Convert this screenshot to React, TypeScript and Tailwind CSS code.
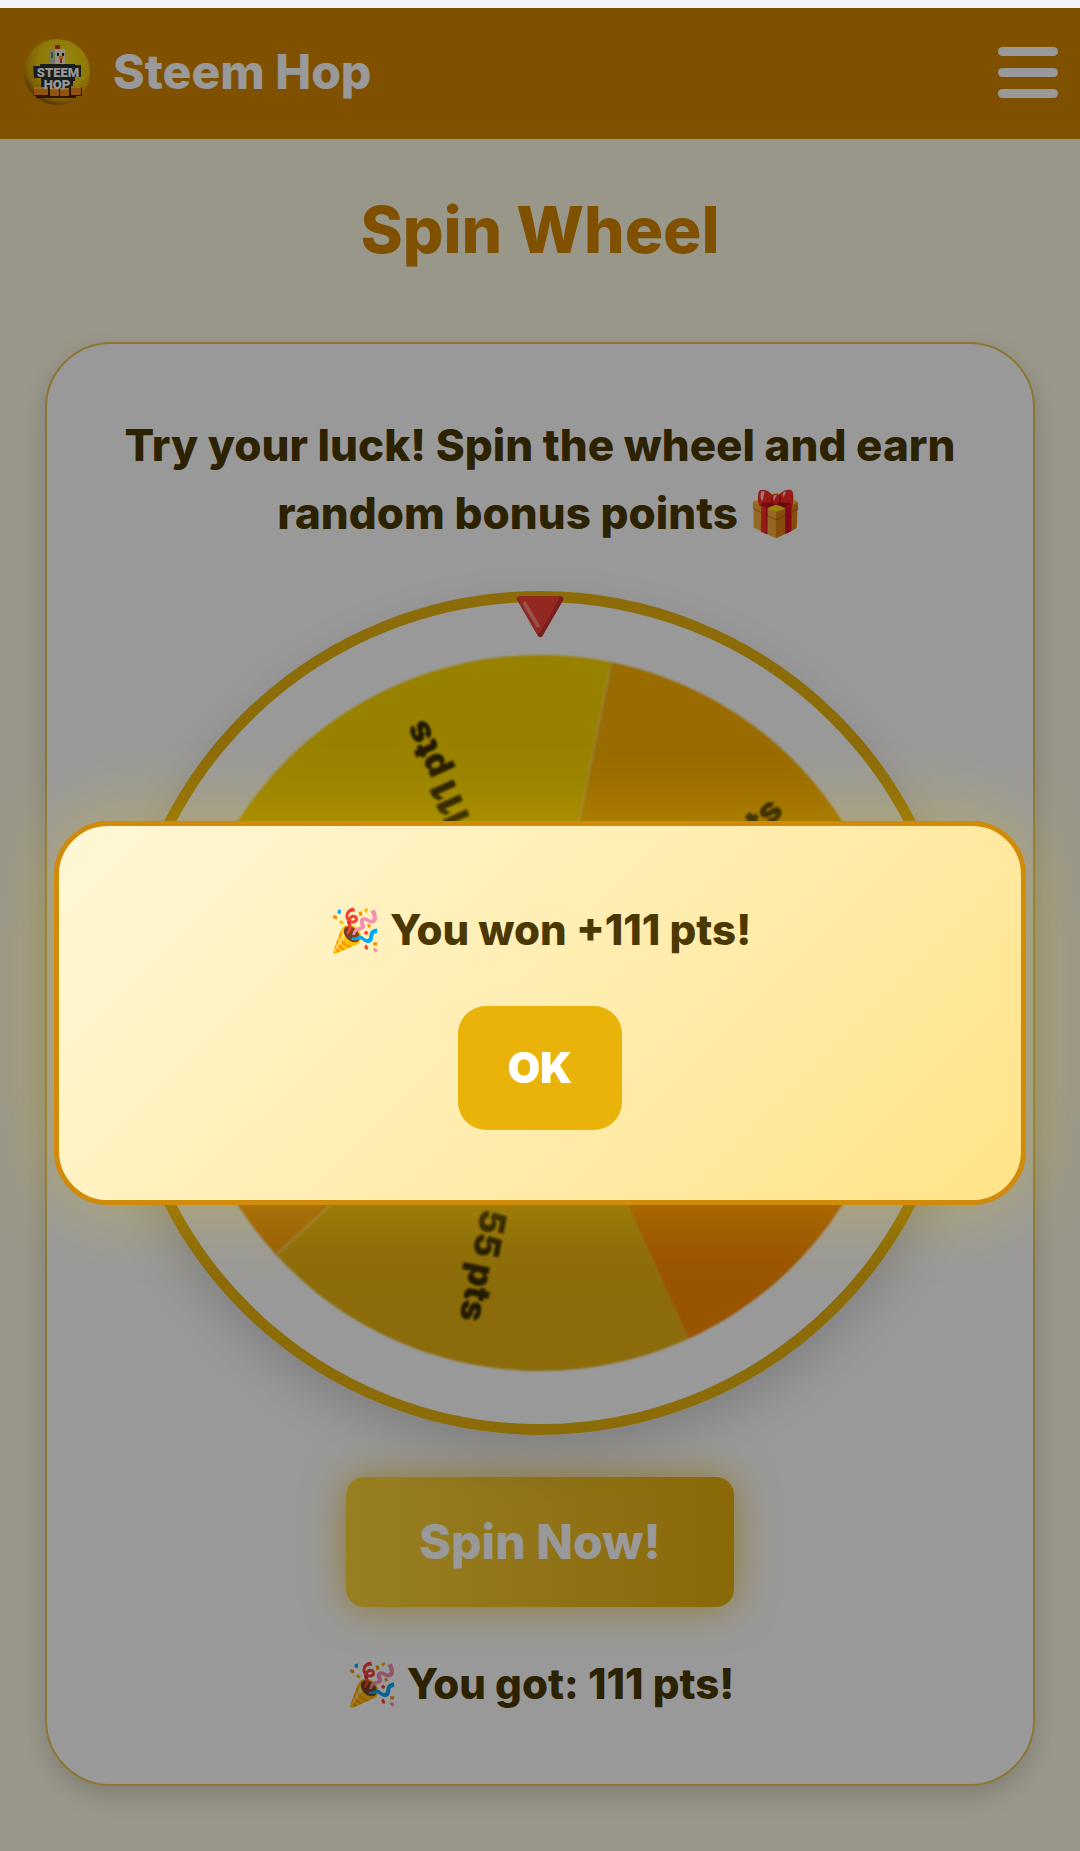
type Segment = {
  start: number;
  color: string;
  label?: string;
};

const SWEEP = 72;

const segments: Segment[] = [
  { start: -60.5, color: "#ffd700", label: "111 pts" },
  { start: 11.5, color: "#ffb300", label: "pts" },
  { start: 83.5, color: "#ff8c00" },
  { start: 155.5, color: "#eab512", label: "55 pts" },
  { start: 227.5, color: "#ff9f0f" },
];

function pointAt(angle: number, radius: number) {
  const a = ((angle - 90) * Math.PI) / 180;
  return { x: Math.cos(a) * radius, y: Math.sin(a) * radius };
}

function slicePath(start: number, radius: number) {
  const a = pointAt(start, radius);
  const b = pointAt(start + SWEEP, radius);
  return `M0 0 L${a.x} ${a.y} A${radius} ${radius} 0 0 1 ${b.x} ${b.y} Z`;
}

function Logo() {
  return (
    <svg viewBox="0 0 68 68" className="size-[68px]" role="img" aria-label="Steem Hop logo">
      <defs>
        <radialGradient id="logo-ball" cx="0.6" cy="0.35" r="0.65">
          <stop offset="0" stopColor="#ffe818" />
          <stop offset="0.6" stopColor="#eec80c" />
          <stop offset="0.88" stopColor="#cf9a08" />
          <stop offset="1" stopColor="#9a6404" />
        </radialGradient>
      </defs>
      <circle cx="34" cy="34" r="33" fill="url(#logo-ball)" />
      <path d="M32 7h5v4h-5z" fill="#d8301a" />
      <path d="M26 11h16v15H26z" fill="#f4ecd4" />
      <path d="M26 11h6v15h-6z" fill="#c9c6a6" />
      <path d="M28 14h2v6h-2z" fill="#4f8a58" />
      <path d="M34 15h2v3h-2zM39 15h2v3h-2z" fill="#2a1d14" />
      <path d="M36 18h4v3h-4z" fill="#f4981a" />
      <path d="M37 21h2v4h-2z" fill="#d8301a" />
      <path d="M30 26h3v3h-3zM36 26h3v3h-3z" fill="#f4981a" />
      <path d="M10 28h7v-2h35v1h6v12h-6v4H20v-3h-9z" fill="#2a3130" />
      <path d="M18 40h32v10H18z" fill="#2a3130" />
      <path d="M11 49h48v9H53v2H13v-2h-2z" fill="#4b2106" />
      <path d="M11 49h14v8H11zM27 50h9v8h-9zM37 50h9v8h-9zM48 48h10v9H48z" fill="#f08a1c" />
      <path d="M11 49h14v2H11zM27 50h9v2h-9zM37 50h9v2h-9zM48 48h10v2H48z" fill="#ffb238" />
      <text x="35" y="39" textAnchor="middle" fontSize="13" fontWeight="900" fill="#ffffff" fontFamily="Roboto, sans-serif">
        STEEM
      </text>
      <text x="34" y="51" textAnchor="middle" fontSize="13" fontWeight="900" fill="#ffffff" fontFamily="Roboto, sans-serif">
        HOP
      </text>
    </svg>
  );
}

function Header() {
  return (
    <header className="flex items-center justify-between bg-[#d48600] pt-[30px] pr-[22px] pb-[33px] pl-[23px]">
      <a href="#home" className="flex items-center gap-[22px] text-[48px] leading-[68px] font-extrabold text-white">
        <Logo />
        Steem Hop
      </a>
      <button type="button" aria-label="Open menu" className="flex flex-col gap-3">
        <span className="h-[9px] w-[60px] rounded-full bg-white" />
        <span className="h-[9px] w-[60px] rounded-full bg-white" />
        <span className="h-[9px] w-[60px] rounded-full bg-white" />
      </button>
    </header>
  );
}

function Wheel() {
  return (
    <div className="relative aspect-square w-full max-w-[844px] rounded-full border-[11px] border-[#eab30f] shadow-[0_20px_48px_rgba(0,0,0,0.16)]">
      <svg viewBox="-411 -411 822 822" className="size-full blur-[1px]" role="img" aria-label="Prize wheel">
        {segments.map((s) => (
          <path key={s.start} d={slicePath(s.start, 358)} fill={s.color} />
        ))}
        {[11.5, 227.5].map((angle) => {
          const end = pointAt(angle, 356);
          return <line key={angle} x1="0" y1="0" x2={end.x} y2={end.y} stroke="#ffe9b0" strokeWidth="2" strokeOpacity="0.5" />;
        })}
        {segments.map((s) =>
          s.label ? (
            <text
              key={s.start}
              transform={`rotate(${s.start + SWEEP / 2 - 90})`}
              x="316"
              y="18"
              textAnchor="end"
              fontSize="36"
              fontWeight="900"
              fill="#3a2c00"
              fontFamily="Inter, sans-serif"
            >
              {s.label}
            </text>
          ) : null,
        )}
      </svg>
      <span className="absolute inset-x-0 -top-[11px] text-center text-[80px] leading-[48px]" aria-hidden="true">
        🔻
      </span>
    </div>
  );
}

function WinDialog() {
  return (
    <div className="absolute inset-0 flex items-center justify-center bg-black/40 pt-[167px]">
      <div
        role="dialog"
        aria-modal="true"
        aria-labelledby="win-title"
        className="flex w-[90%] flex-col items-center rounded-[54px] border-[5px] border-[#d18b0a] bg-linear-135 from-[#fff8d6] to-[#ffe388] px-12 pt-[74px] pb-[70px] shadow-[0_0_84px_rgba(255,215,0,0.32)]"
      >
        <h2 id="win-title" className="text-center text-[42px] leading-[60px] font-extrabold text-[#4a3800]">
          🎉 You won +111 pts!
        </h2>
        <button
          type="button"
          className="mt-[46px] rounded-[28px] bg-[#e9b30a] px-[50px] py-7 text-[42px] leading-[68px] font-black text-white"
        >
          OK
        </button>
      </div>
    </div>
  );
}

export default function App() {
  return (
    <div className="border-t-8 border-[#f6f4fb] font-['Inter',sans-serif]">
      <div className="relative bg-[#fffbe6]">
        <Header />
        <main className="px-[45px] pt-[55px] pb-[65px]">
          <h1 className="text-center text-[64px] leading-[72px] font-extrabold text-[#d48600]">Spin Wheel</h1>
          <section className="mt-[76px] flex flex-col items-center rounded-[66px] border-2 border-[#ecc558] bg-white px-[60px] pt-[67px] pb-[66px] shadow-[0_10px_24px_rgba(0,0,0,0.16)]">
            <p className="text-center text-[44px] leading-[68px] font-extrabold text-[#4a3800]">
              Try your luck! Spin the wheel and earn random bonus points 🎁
            </p>
            <div className="mt-11 flex w-full justify-center">
              <Wheel />
            </div>
            <button
              type="button"
              className="mt-[42px] w-[388px] rounded-[18px] bg-linear-to-r from-[#fdd53a] to-[#e6ae0b] py-[31px] text-[48px] leading-[68px] font-extrabold text-white shadow-[0_0_42px_rgba(234,179,8,0.7)]"
            >
              Spin Now!
            </button>
            <p className="mt-[43px] text-[42px] leading-[68px] font-extrabold text-[#4a3800]">🎉 You got: 111 pts!</p>
          </section>
        </main>
        <WinDialog />
      </div>
    </div>
  );
}
